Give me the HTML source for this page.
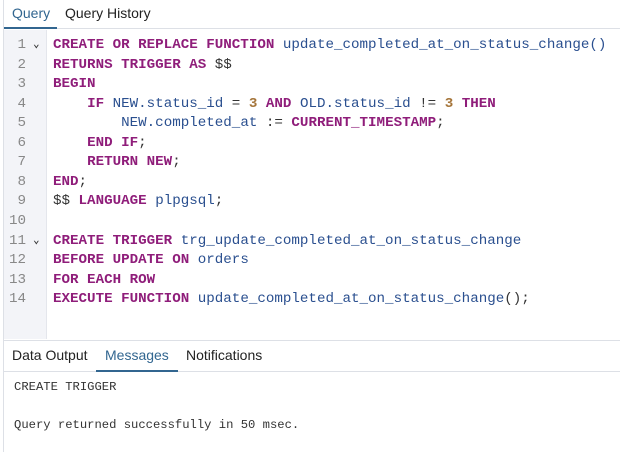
<!DOCTYPE html><html><head><style>
body{margin:0;width:620px;height:452px;background:#fff;position:relative;overflow:hidden;font-family:"Liberation Sans",sans-serif}
.lb{position:absolute;left:3px;top:0;bottom:0;width:1px;background:#dde0e6}
.tabs{position:absolute;left:4px;right:0;height:28px;border-bottom:1px solid #dde0e6;font-size:14px;color:#222}
.tabs span{position:absolute;top:5px}
.ul{position:absolute;height:2px;background:#326690;bottom:-1px}
.gut{position:absolute;left:4px;top:30px;width:42px;height:309px;background:#f3f4f8;border-right:1px solid #e4e6ec}
.code{position:absolute;left:0;top:36px;font-family:"Liberation Mono",monospace;font-size:14.2px;line-height:19.55px;white-space:pre;color:#333}
.ln{position:absolute;left:0;width:26px;text-align:right;color:#888}
.ar{position:absolute;left:33px;font-size:11px;font-weight:bold;color:#333}
.t{position:absolute;left:53px}
.k{color:#8f1d7a;font-weight:bold}.f{color:#2a4f8f}.n{color:#a5753a;font-weight:bold}
.msg{position:absolute;left:14px;font-family:"Liberation Mono",monospace;font-size:12.2px;color:#333}
</style></head><body>
<div class="lb"></div>
<div class="tabs" style="top:0"><span style="left:8px;color:#326690">Query</span><span style="left:61px">Query History</span><div class="ul" style="left:0;width:53px"></div></div>
<div class="gut"></div>
<div class="code">
<div class="ln" style="top:0">1</div><div class="ar" style="top:0">⌄</div><div class="t" style="top:0"><span class="k">CREATE OR REPLACE FUNCTION</span> <span class="f">update_completed_at_on_status_change()</span></div>
<div class="ln" style="top:19.55px">2</div><div class="t" style="top:19.55px"><span class="k">RETURNS TRIGGER AS</span> $$</div>
<div class="ln" style="top:39.1px">3</div><div class="t" style="top:39.1px"><span class="k">BEGIN</span></div>
<div class="ln" style="top:58.65px">4</div><div class="t" style="top:58.65px">    <span class="k">IF</span> <span class="f">NEW.status_id</span> = <span class="n">3</span> <span class="k">AND</span> <span class="f">OLD.status_id</span> != <span class="n">3</span> <span class="k">THEN</span></div>
<div class="ln" style="top:78.2px">5</div><div class="t" style="top:78.2px">        <span class="f">NEW.completed_at</span> := <span class="k">CURRENT_TIMESTAMP</span>;</div>
<div class="ln" style="top:97.75px">6</div><div class="t" style="top:97.75px">    <span class="k">END IF</span>;</div>
<div class="ln" style="top:117.3px">7</div><div class="t" style="top:117.3px">    <span class="k">RETURN NEW</span>;</div>
<div class="ln" style="top:136.85px">8</div><div class="t" style="top:136.85px"><span class="k">END</span>;</div>
<div class="ln" style="top:156.4px">9</div><div class="t" style="top:156.4px">$$ <span class="k">LANGUAGE</span> <span class="f">plpgsql</span>;</div>
<div class="ln" style="top:175.95px">10</div>
<div class="ln" style="top:195.5px">11</div><div class="ar" style="top:195.5px">⌄</div><div class="t" style="top:195.5px"><span class="k">CREATE TRIGGER</span> <span class="f">trg_update_completed_at_on_status_change</span></div>
<div class="ln" style="top:215.05px">12</div><div class="t" style="top:215.05px"><span class="k">BEFORE UPDATE ON</span> <span class="f">orders</span></div>
<div class="ln" style="top:234.6px">13</div><div class="t" style="top:234.6px"><span class="k">FOR EACH ROW</span></div>
<div class="ln" style="top:254.15px">14</div><div class="t" style="top:254.15px"><span class="k">EXECUTE FUNCTION</span> <span class="f">update_completed_at_on_status_change</span>();</div>
</div>
<div style="position:absolute;left:4px;right:0;top:340px;height:1px;background:#dde0e6"></div>
<div class="tabs" style="top:341px;height:30px"><span style="left:8px;top:6px">Data Output</span><span style="left:101px;top:6px;color:#326690">Messages</span><span style="left:182px;top:6px">Notifications</span><div class="ul" style="left:92px;width:82px"></div></div>
<div class="msg" style="top:380px">CREATE TRIGGER</div>
<div class="msg" style="top:418px">Query returned successfully in 50 msec.</div>
</body></html>
